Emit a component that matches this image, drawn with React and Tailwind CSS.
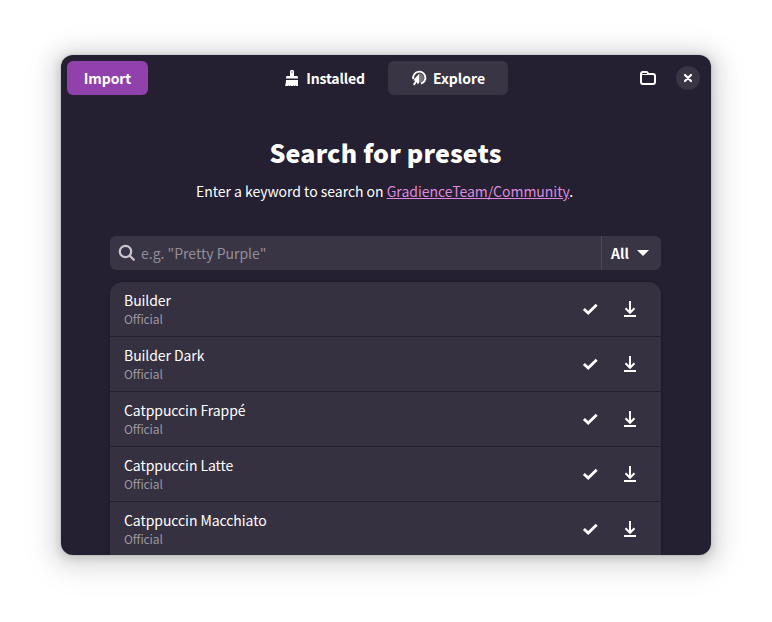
const presets = ['Builder', 'Builder Dark', 'Catppuccin Frappé', 'Catppuccin Latte', 'Catppuccin Macchiato'];

function BrushIcon() {
  return (
    <svg width="16" height="16" viewBox="0 0 16 16" fill="currentColor">
      <path d="M6 6V1.800a2 2 0 0 1 4 0V6h2.600c.8 0 1.400.6 1.400 1.400V8.600H2V7.400C2 6.600 2.600 6 3.400 6z" />
      <path d="M2 10h12v6h-1.800l-.4-1.300-.4 1.300H9.600l-.3-1.300L9 16H7.200l-.3-1.300-.4 1.300H4.700l-.1-1.300-.6 1.300H1.100c.6-1.900.9-3.800.9-6z" />
      <rect x="7.300" y="1.400" width="1.400" height="1.400" fill="#77727f" />
    </svg>
  );
}

function ExploreIcon() {
  return (
    <svg width="16" height="16" viewBox="0 0 16 16" fill="none">
      <path d="M8.500 3.500a4.500 4.500 0 0 1 0 9z" fill="#77727f" />
      <path d="M2.300 9A6.100 6.100 0 1 1 10 13.600" stroke="currentColor" strokeWidth="1.900" />
      <path d="M8.300 3.600 2.200 10.300l2.100.4L2 14.300l1.500 1.200 2.300-3.400 1 2.300 1.500-2z" fill="currentColor" />
    </svg>
  );
}

function FolderIcon() {
  return (
    <svg width="16" height="16" viewBox="0 0 16 16" fill="none" stroke="currentColor" strokeWidth="2" strokeLinejoin="round">
      <path d="M1 4v8a2 2 0 0 0 2 2h10a2 2 0 0 0 2-2V6a2 2 0 0 0-2-2H8.500L7 2H3a2 2 0 0 0-2 2z" />
      <path d="M1 4.500h7" strokeWidth="1" />
    </svg>
  );
}

function CloseIcon() {
  return (
    <svg width="16" height="16" viewBox="0 0 16 16" stroke="currentColor" strokeWidth="2.200" strokeLinecap="round">
      <path d="m5 5 6 6M11 5l-6 6" />
    </svg>
  );
}

function SearchIcon() {
  return (
    <svg width="18" height="18" viewBox="0 0 18 18" fill="none" stroke="currentColor" strokeWidth="2.200" strokeLinecap="round">
      <circle cx="7.500" cy="7.500" r="5.700" />
      <path d="m11.800 11.800 4 4" strokeWidth="2.300" />
    </svg>
  );
}

function CheckIcon() {
  return (
    <svg width="16" height="16" viewBox="0 0 16 16" fill="none" stroke="currentColor" strokeWidth="2.800">
      <path d="m1.900 8 4.300 4.100 8.500-8.300" />
    </svg>
  );
}

function DownloadIcon() {
  return (
    <svg width="16" height="16" viewBox="0 0 16 16" fill="none" stroke="currentColor" strokeWidth="2">
      <path d="M8 0v11.500M3.500 7.300 8 11.800l4.500-4.500M2 15h12" />
    </svg>
  );
}

function Header() {
  return (
    <header className="grid h-[46px] shrink-0 grid-cols-[201px_240px_1fr] items-center px-[6px] font-bold">
      <button className="h-[34px] w-[81px] rounded-[6px] bg-[#9141ac] text-[14px] tracking-[-0.1px]">Import</button>
      <nav className="flex">
        <button className="flex h-[34px] w-[120px] items-center justify-center gap-[6px] rounded-[6px] pr-[7px] text-[14px] tracking-[-0.15px]">
          <BrushIcon />
          Installed
        </button>
        <button className="flex h-[34px] w-[120px] items-center justify-center gap-[6px] rounded-[6px] bg-[#3a3545] text-[14px]">
          <ExploreIcon />
          Explore
        </button>
      </nav>
      <div className="flex items-center justify-end gap-5 pr-[5px]">
        <FolderIcon />
        <button className="flex size-6 items-center justify-center rounded-full bg-[#3a3545]">
          <CloseIcon />
        </button>
      </div>
    </header>
  );
}

function PresetRow({ name }) {
  return (
    <li className="flex h-[55px] shrink-0 items-center border-b border-[#241f31] pr-[23px] pl-[14px]">
      <div className="flex-1">
        <div className="text-[14px] leading-[20px] tracking-[-0.07px]">{name}</div>
        <div className="text-[12px] leading-[18px] tracking-[-0.1px] text-[#9b98a0]">Official</div>
      </div>
      <div className="flex gap-6">
        <CheckIcon />
        <DownloadIcon />
      </div>
    </li>
  );
}

export default function App() {
  return (
    <div className="flex h-[622px] w-[772px] items-start justify-center bg-white pt-[55px] font-['Noto_Sans_CJK_SC','Noto_Sans',sans-serif] text-white">
      <main className="flex h-[500px] w-[650px] flex-col overflow-hidden rounded-[12px] bg-[#241f31] shadow-[0_2px_8px_2px_rgba(0,0,0,0.13),0_3px_20px_10px_rgba(0,0,0,0.09),0_6px_32px_16px_rgba(0,0,0,0.04),0_0_0_1px_rgba(0,0,0,0.05)]">
        <Header />
        <h1 className="mt-[33px] h-[36px] pr-px text-center text-[25px] leading-[36px] font-black tracking-[0.17px] whitespace-nowrap">Search for presets</h1>
        <p className="mt-[11px] h-[20px] pr-[3px] text-center text-[14px] leading-[20px] tracking-[-0.02px] whitespace-nowrap">
          Enter a keyword to search on <a className="text-[#dc8add] underline">GradienceTeam/Community</a>.
        </p>
        <div className="mt-[35px] ml-[49px] flex h-[34px] w-[551px] shrink-0 overflow-hidden rounded-[6px] bg-[#3a3545]">
          <div className="flex flex-1 items-center gap-[5px] pl-[8px] text-[14px] text-[#918e98]">
            <span className="text-[#c8c6cb]"><SearchIcon /></span>
            e.g. "Pretty Purple"
          </div>
          <button className="flex w-[60px] items-center gap-[8px] border-l border-[#4e4959] pl-[9px] text-[14px] font-bold">
            All
            <svg width="12" height="6" viewBox="0 0 12 6" fill="currentColor"><path d="M0 0h12L6 6z" /></svg>
          </button>
        </div>
        <ul className="mt-[12px] ml-[49px] flex min-h-0 w-[551px] flex-1 flex-col overflow-hidden rounded-t-[12px] bg-[#363140] shadow-[0_0_2px_1px_rgba(0,0,0,0.1)]">
          {presets.map((name) => <PresetRow key={name} name={name} />)}
        </ul>
      </main>
    </div>
  );
}
